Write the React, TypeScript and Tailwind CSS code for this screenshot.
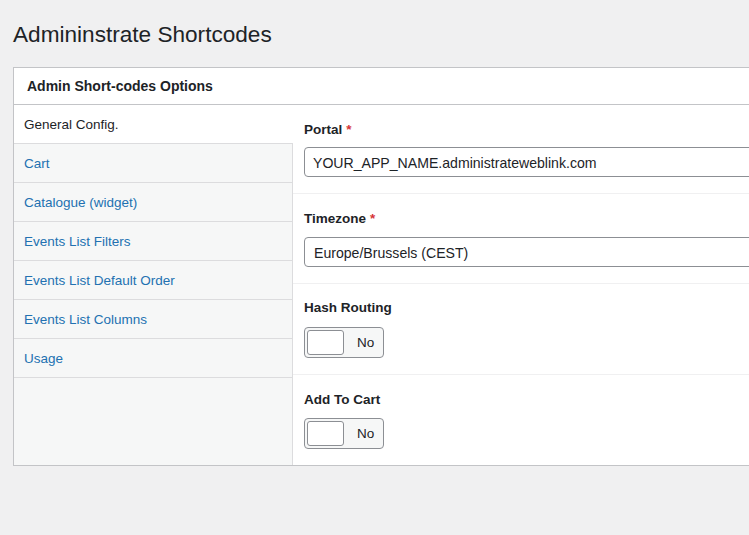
import React from "react";

const tabs = [
  "General Config.",
  "Cart",
  "Catalogue (widget)",
  "Events List Filters",
  "Events List Default Order",
  "Events List Columns",
  "Usage",
];

function Toggle() {
  return (
    <div className="flex h-[31px] w-[80px] items-center rounded-[4px] border border-[#8c8f94] bg-[#f6f7f7] pl-[2px]">
      <div className="h-[25px] w-[37px] rounded-[3px] border border-[#8c8f94] bg-white" />
      <span className="ml-[13px] pt-[2px] text-[13.5px] font-medium text-[#1d2327]">No</span>
    </div>
  );
}

function Label({ text, required }: { text: string; required?: boolean }) {
  return (
    <div className="h-5 pt-[1px] text-[13.5px] font-semibold leading-5 text-[#1d2327]">
      {text}
      {required && <span className="ml-[4px] text-[#d63638]">*</span>}
    </div>
  );
}

export default function App() {
  return (
    <div
      className="h-[535px] w-[749px] overflow-hidden bg-[#f0f0f1] text-[#1d2327]"
      style={{ fontFamily: '"Liberation Sans", Arial, sans-serif' }}
    >
      <h1 className="pl-[13px] pt-[22px] text-[22.6px] font-normal leading-[26px] text-[#1d2327]">
        Admininstrate Shortcodes
      </h1>
      <div className="ml-[13px] mt-[19px] w-[780px] border border-[#c3c4c7] bg-white">
        <div className="flex h-[37px] items-center border-b border-[#c3c4c7] pl-[13px] pt-[1px] text-[14px] font-semibold">
          Admin Short-codes Options
        </div>
        <div className="flex">
          <div className="flex w-[279px] shrink-0 flex-col">
            {tabs.map((t, i) => (
              <div
                key={t}
                className={
                  i === 0
                    ? "flex h-[39px] items-center border-b border-[#dcdcde] bg-white pl-[10px] pt-[2px] text-[13.5px] text-[#1d2327]"
                    : "flex h-[39px] items-center border-b border-r border-[#dcdcde] bg-[#f6f7f7] pl-[10px] pt-[2px] text-[13.5px] text-[#2271b1]"
                }
              >
                {t}
              </div>
            ))}
            <div className="flex-1 border-r border-[#dcdcde] bg-[#f6f7f7]" />
          </div>
          <div className="flex-1">
            <div className="border-b border-[#f0f0f1] pb-4 pl-[11px] pt-[14px]">
              <Label text="Portal" required />
              <div className="mt-[8px] flex h-[30px] items-center rounded-[4px] border border-[#8c8f94] pl-[8px] pt-[3px] text-[14.1px]">
                YOUR_APP_NAME.administrateweblink.com
              </div>
            </div>
            <div className="border-b border-[#f0f0f1] pb-4 pl-[11px] pt-[14px]">
              <Label text="Timezone" required />
              <div className="mt-[9px] flex h-[30px] items-center rounded-[4px] border border-[#8c8f94] pl-[9px] pt-[3px] text-[14.1px]">
                Europe/Brussels (CEST)
              </div>
            </div>
            <div className="border-b border-[#f0f0f1] pb-4 pl-[11px] pt-[13px]">
              <Label text="Hash Routing" />
              <div className="mt-[10px]">
                <Toggle />
              </div>
            </div>
            <div className="pb-4 pl-[11px] pt-[14px]">
              <Label text="Add To Cart" />
              <div className="mt-[9px]">
                <Toggle />
              </div>
            </div>
          </div>
        </div>
      </div>
    </div>
  );
}
